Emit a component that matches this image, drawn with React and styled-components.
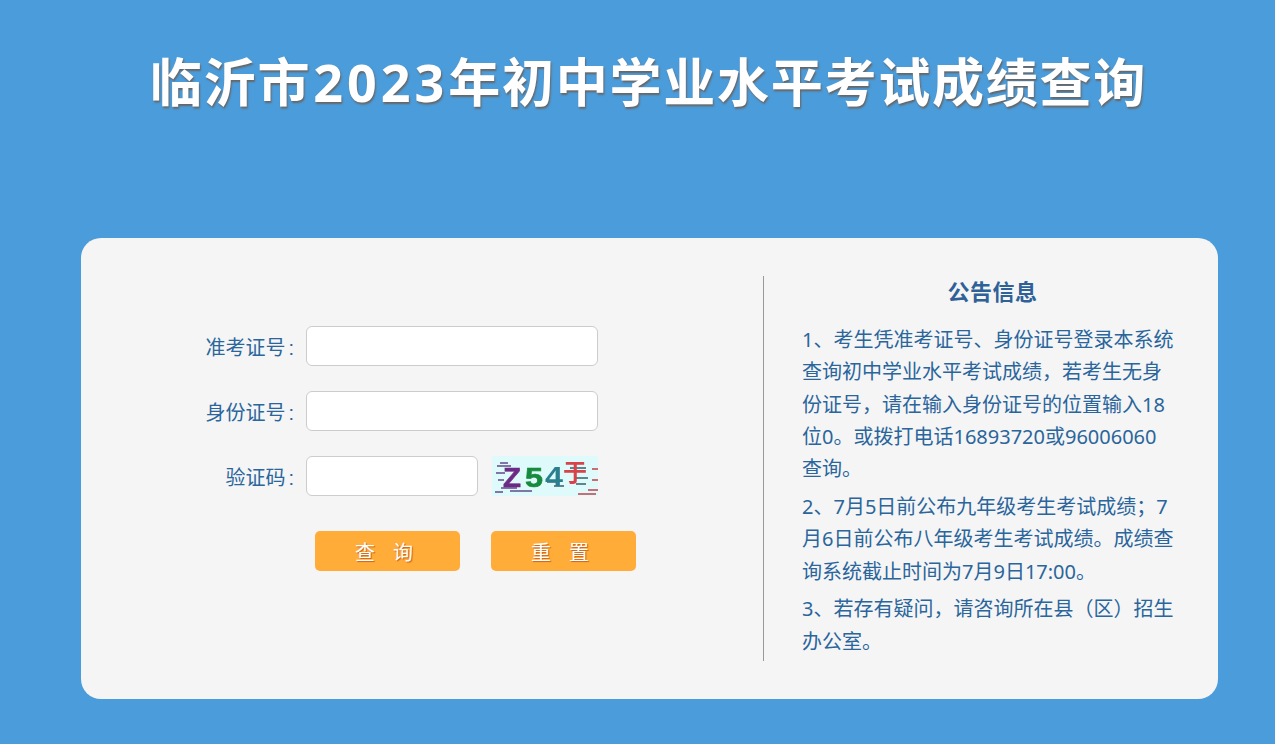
import React from 'react'
import styled, { createGlobalStyle } from 'styled-components'

const GlobalStyle = createGlobalStyle`
  html, body {
    margin: 0;
    padding: 0;
    height: 100%;
    background: #4b9cdb;
    font-family: "Noto Sans", "Noto Sans CJK SC", sans-serif;
  }
`

const Page = styled.div`
  width: 1275px;
  height: 744px;
  overflow: hidden;
  padding-top: 48px;
  box-sizing: border-box;
`

const Title = styled.h1`
  margin: 0;
  height: 190px;
  line-height: 68px;
  font-size: 52px;
  font-weight: 700;
  letter-spacing: 1.75px;
  color: #fff;
  text-align: center;
  padding-left: 22px;
  box-sizing: border-box;
  text-shadow: 1px 2px 2px #666;
`

const Digits = styled.span`
  letter-spacing: 4px;
  margin-left: 2px;
`

const Panel = styled.div`
  width: 1137px;
  height: 461px;
  margin-left: 81px;
  box-sizing: border-box;
  padding: 38px 0;
  display: flex;
  background: #f5f5f5;
  border-radius: 20px;
`

const FormSide = styled.div`
  width: 683px;
  box-sizing: border-box;
  border-right: 1px solid #999;
  padding: 50px 0 0 95px;
`

const Row = styled.div`
  display: flex;
  align-items: center;
  height: 40px;
  margin-bottom: 25px;
`

const Label = styled.label`
  width: 130px;
  padding-right: 12px;
  box-sizing: border-box;
  font-size: 20px;
  color: #2a659c;
  text-align: right;
  white-space: nowrap;
`

const Colon = styled.span`
  margin-left: 3px;
  font-family: "Liberation Sans", sans-serif;
`

const Input = styled.input`
  width: ${(p) => p.$w}px;
  height: 40px;
  margin: 0;
  box-sizing: border-box;
  background: #fff;
  border: 1px solid #ccc;
  border-radius: 6px;
  outline: none;
`

const Captcha = styled.svg`
  display: block;
  width: 106px;
  height: 40px;
  margin-left: 14px;
  overflow: visible;
`

const Buttons = styled.div`
  display: flex;
  gap: 31px;
  margin: 35px 0 0 139px;
`

const Button = styled.button`
  width: 145px;
  height: 40px;
  padding: 0 0 0 11px;
  border: 0;
  border-radius: 5px;
  background: #ffac38;
  color: #fff;
  font-family: inherit;
  font-size: 20px;
  letter-spacing: 18px;
  white-space: nowrap;
  text-shadow: 1px 1px 1px #c8611a;
`

const Notice = styled.div`
  width: 373px;
  margin-left: 38px;
  color: #2a659c;
`

const NoticeTitle = styled.h2`
  margin: 0 0 16px;
  height: 32px;
  line-height: 30px;
  padding-left: 8px;
  box-sizing: border-box;
  font-size: 22px;
  font-weight: 700;
  letter-spacing: 0.5px;
  text-align: center;
  color: #2f6198;
`

const Para = styled.p`
  margin: 0 0 5.5px;
  font-size: 20px;
  line-height: 32.3px;
`

const App = () => (
  <Page>
    <GlobalStyle />
    <Title>临沂市<Digits>2023</Digits>年初中学业水平考试成绩查询</Title>
    <Panel>
      <FormSide>
        <Row>
          <Label>准考证号<Colon>:</Colon></Label>
          <Input $w={292} />
        </Row>
        <Row>
          <Label>身份证号<Colon>:</Colon></Label>
          <Input $w={292} />
        </Row>
        <Row>
          <Label>验证码<Colon>:</Colon></Label>
          <Input $w={172} />
          <Captcha viewBox="0 0 106 40">
            <defs>
              <filter id="soft">
                <feGaussianBlur stdDeviation="0.5" />
              </filter>
            </defs>
            <rect width="106" height="40" fill="#dffafa" />
            <g filter="url(#soft)">
              <path d="M5 10h14M8 7h8M4 17h9M6 24h6M9 32h16M18 35h22M3 36h8" stroke="#5f4a8a" strokeWidth="1.5" fill="none" />
              <path d="M55 26h12M62 30h10M78 12h16M84 22h12M84 28h10" stroke="#35606a" strokeWidth="1.5" fill="none" />
              <path d="M92 38h12M100 13h6M100 24h6M96 34h10M86 38h8" stroke="#c2404a" strokeWidth="1.5" fill="none" />
              <text x="11" y="31" fontFamily="Liberation Sans" fontWeight="700" fontSize="28" textLength="18" lengthAdjust="spacingAndGlyphs" stroke="#6d2a85" strokeWidth="0.6" fill="#6d2a85">Z</text>
              <text x="33" y="31" fontFamily="Liberation Sans" fontWeight="700" fontSize="28" textLength="18" lengthAdjust="spacingAndGlyphs" stroke="#158a3c" strokeWidth="0.6" fill="#158a3c">5</text>
              <text x="53" y="30" fontFamily="Liberation Sans" fontWeight="700" fontSize="27" textLength="18" lengthAdjust="spacingAndGlyphs" fill="#2b7f8f">4</text>
              <text x="71" y="25" fontFamily="Noto Sans CJK SC" fontWeight="700" fontSize="24" fill="#d8424a">于</text>
            </g>
          </Captcha>
        </Row>
        <Buttons>
          <Button>查询</Button>
          <Button>重置</Button>
        </Buttons>
      </FormSide>
      <Notice>
        <NoticeTitle>公告信息</NoticeTitle>
        <Para>1、考生凭准考证号、身份证号登录本系统查询初中学业水平考试成绩，若考生无身份证号，请在输入身份证号的位置输入18位0。或拨打电话16893720或96006060查询。</Para>
        <Para>2、7月5日前公布九年级考生考试成绩；7月6日前公布八年级考生考试成绩。成绩查询系统截止时间为7月9日17:00。</Para>
        <Para>3、若存有疑问，请咨询所在县（区）招生办公室。</Para>
      </Notice>
    </Panel>
  </Page>
)

export default App
